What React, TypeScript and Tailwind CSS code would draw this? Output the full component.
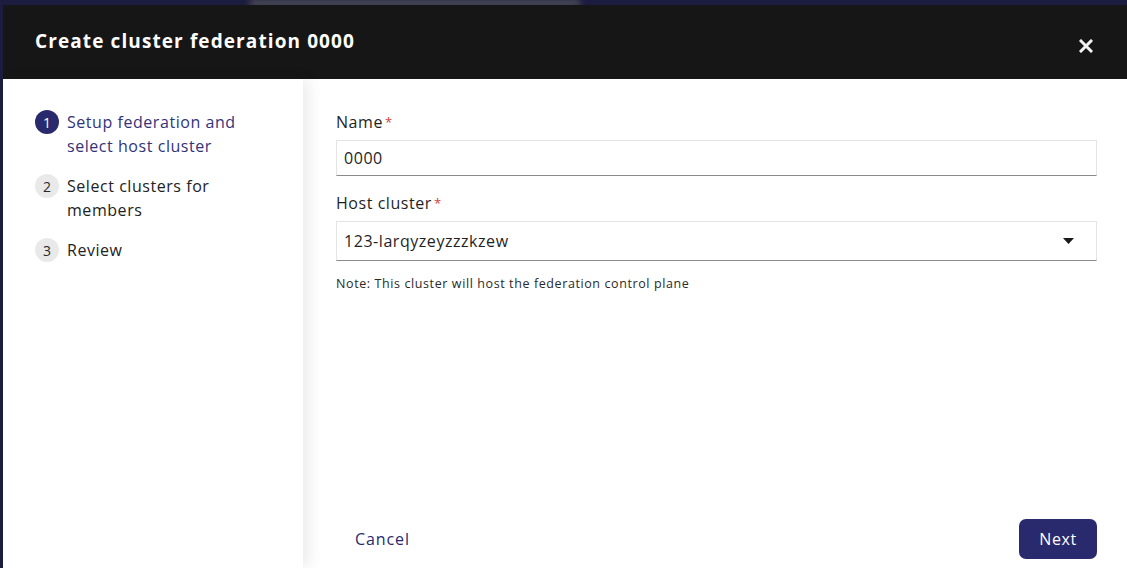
import React from "react";

export default function App() {
  const font = { fontFamily: '"Open Sans", "Noto Sans", sans-serif' };
  return (
    <div
      className="w-[1127px] h-[568px] overflow-hidden bg-[#1b1c3f] flex flex-col relative tracking-[0.55px]"
      style={font}
    >
      <div className="absolute left-[250px] top-0 w-[330px] h-[6px] bg-[#55555a] blur-[3px]" />
      <div className="ml-[3px] mt-[5px] flex-1 flex flex-col relative bg-white">
        <div className="h-[74px] bg-[#161616] flex items-center justify-between pl-[32px] pr-[34px]">
          <h1 className="text-white text-[19px] font-bold tracking-[1.1px] -mt-[2px]">
            Create cluster federation 0000
          </h1>
          <svg width="14" height="14" viewBox="0 0 14 14" className="mt-[8px]">
            <path d="M2 2 L12 12 M12 2 L2 12" stroke="#f2f2f2" strokeWidth="3" strokeLinecap="square" />
          </svg>
        </div>
        <div className="flex flex-1">
          <aside className="w-[300px] bg-white pt-[31px] pl-[32px] flex flex-col gap-[16px] relative z-10 shadow-[6px_0_14px_rgba(0,0,0,0.08)]">
            <Step n={1} active lines={["Setup federation and", "select host cluster"]} />
            <Step n={2} lines={["Select clusters for", "members"]} />
            <Step n={3} lines={["Review"]} />
          </aside>
          <main className="flex-1 flex flex-col pl-[33px] pr-[30px] pt-[111px] pb-[9px] relative">
            <div className="flex flex-col">
              <label className="text-[16px] text-[#1f1f1f] leading-[24px] -mt-[80px]">
                Name<span className="text-[#d43c3c] text-[13px] align-top ml-[2px]">*</span>
              </label>
              <div className="mt-[6px] h-[36px] border border-[#e4e4e4] border-b-[#8a8a8a] flex items-center pl-[7px] text-[16px] text-[#1f1f1f]">
                0000
              </div>
              <label className="mt-[15px] text-[16px] text-[#1f1f1f] leading-[24px]">
                Host cluster<span className="text-[#d43c3c] text-[13px] align-top ml-[2px]">*</span>
              </label>
              <div className="mt-[6px] h-[40px] border border-[#e4e4e4] border-b-[#8a8a8a] flex items-center justify-between pl-[7px] pr-[22px] text-[16px] text-[#1f1f1f]">
                <span>123-larqyzeyzzzkzew</span>
                <svg width="11" height="6" viewBox="0 0 11 6">
                  <path d="M0 0 H11 L5.5 6 Z" fill="#1a1a1a" />
                </svg>
              </div>
              <p className="mt-[14px] text-[12.5px] text-[#2a2a2a] tracking-[0.6px]">
                Note: This cluster will host the federation control plane
              </p>
            </div>
            <div className="mt-auto flex items-center justify-between">
              <button className="ml-[19px] text-[16px] text-[#29296e] tracking-[0.9px]">Cancel</button>
              <button className="w-[78px] h-[40px] rounded-[7px] bg-[#29296e] text-white text-[16px]">
                Next
              </button>
            </div>
          </main>
        </div>
      </div>
    </div>
  );
}

function Step({ n, lines, active }: { n: number; lines: string[]; active?: boolean }) {
  return (
    <div className="flex items-start gap-[8px]">
      <div
        className={
          active
            ? "w-[24px] h-[24px] rounded-full bg-[#29296e] text-white text-[14px] flex items-center justify-center shrink-0 tracking-normal"
            : "w-[24px] h-[24px] rounded-full bg-[#e9e9e9] text-[#2a2a2a] text-[14px] flex items-center justify-center shrink-0 tracking-normal"
        }
      >
        {n}
      </div>
      <div className={active ? "text-[16px] leading-[24px] text-[#33337a]" : "text-[16px] leading-[24px] text-[#222222]"}>
        {lines.map((l) => (
          <div key={l}>{l}</div>
        ))}
      </div>
    </div>
  );
}
